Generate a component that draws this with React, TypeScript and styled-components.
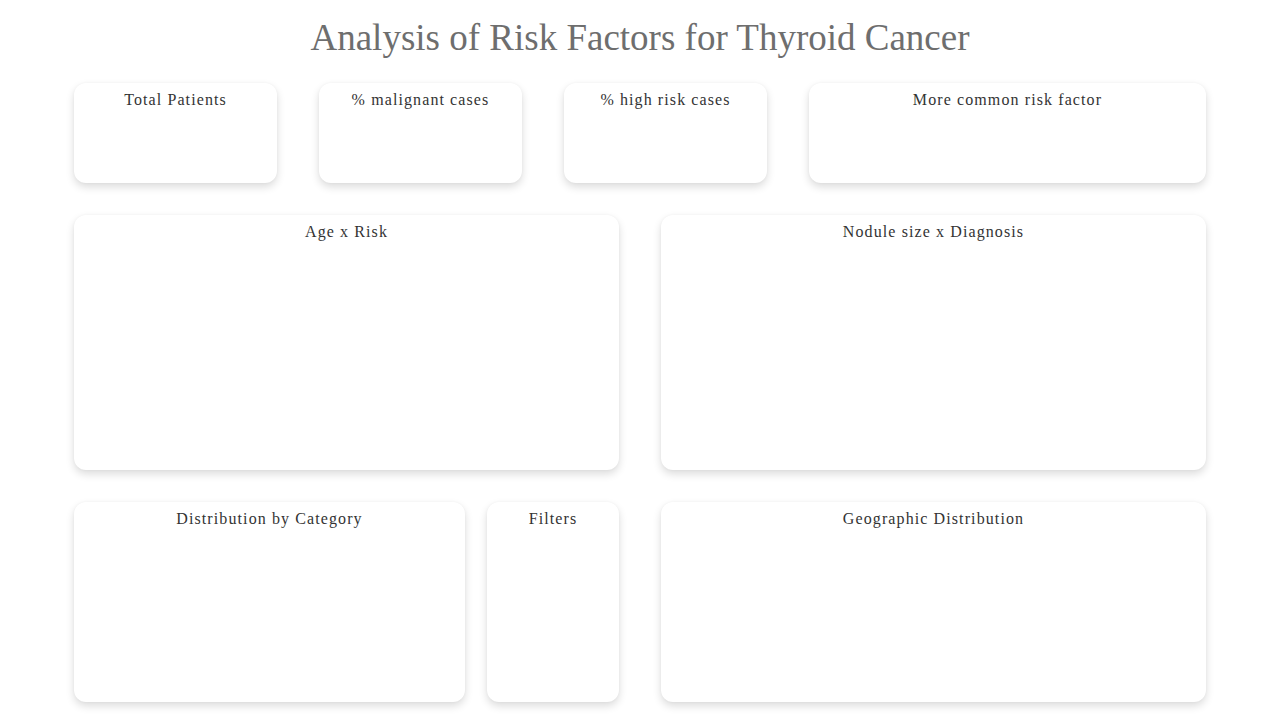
import React from "react";
import styled, { createGlobalStyle } from "styled-components";

const Global = createGlobalStyle`
  html, body { margin: 0; padding: 0; background: #ffffff; }
  body { font-family: "Liberation Serif", "DejaVu Serif", serif; }
`;

const Page = styled.div`
  width: 1132px;
  margin: 0 auto;
  display: flex;
  flex-direction: column;
`;

const Heading = styled.h1`
  margin: 0;
  height: 83px;
  box-sizing: border-box;
  padding-top: 16px;
  text-align: center;
  font-weight: 400;
  font-size: 37px;
  line-height: 44px;
  color: #6e6e6e;
`;

const Row = styled.div`
  display: flex;
  margin-bottom: 32px;
`;

const Card = styled.div<{ $w: number; $h: number; $mr?: number }>`
  width: ${(p) => p.$w}px;
  height: ${(p) => p.$h}px;
  margin-right: ${(p) => p.$mr ?? 0}px;
  flex: none;
  background: #ffffff;
  border-radius: 12px;
  box-shadow: 0 4px 8px rgba(0, 0, 0, 0.14), 0 0 3px rgba(0, 0, 0, 0.04);
  box-sizing: border-box;
  padding-top: 8px;
`;

const CardTitle = styled.div`
  text-align: center;
  font-size: 16px;
  line-height: 18px;
  letter-spacing: 1.1px;
  color: #333333;
`;

export default function App() {
  return (
    <>
      <Global />
      <Page>
        <Heading>Analysis of Risk Factors for Thyroid Cancer</Heading>
        <Row>
          <Card $w={203} $h={100} $mr={42}><CardTitle>Total Patients</CardTitle></Card>
          <Card $w={203} $h={100} $mr={42}><CardTitle>% malignant cases</CardTitle></Card>
          <Card $w={203} $h={100} $mr={42}><CardTitle>% high risk cases</CardTitle></Card>
          <Card $w={397} $h={100}><CardTitle>More common risk factor</CardTitle></Card>
        </Row>
        <Row>
          <Card $w={545} $h={255} $mr={42}><CardTitle>Age x Risk</CardTitle></Card>
          <Card $w={545} $h={255}><CardTitle>Nodule size x Diagnosis</CardTitle></Card>
        </Row>
        <Row>
          <Card $w={391} $h={200} $mr={22}><CardTitle>Distribution by Category</CardTitle></Card>
          <Card $w={132} $h={200} $mr={42}><CardTitle>Filters</CardTitle></Card>
          <Card $w={545} $h={200}><CardTitle>Geographic Distribution</CardTitle></Card>
        </Row>
      </Page>
    </>
  );
}
